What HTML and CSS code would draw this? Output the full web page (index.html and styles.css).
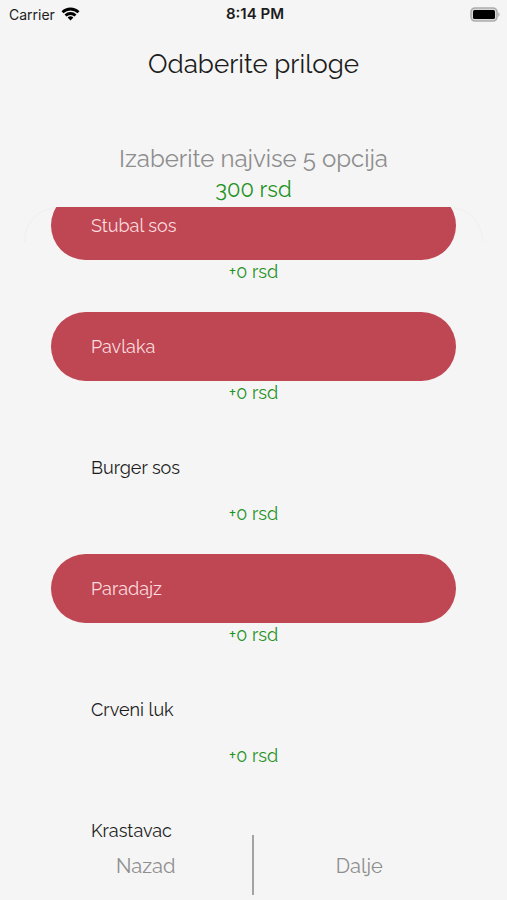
FILE: index.html
```html
<!DOCTYPE html>
<html lang="sr">
<head>
	<meta charset="utf-8">
	<meta name="viewport" content="width=device-width">
	<title>Odaberite priloge</title>
	<link rel="stylesheet" href="styles.css">
</head>
<body>
	<div class="status">
		<div class="carrier">
			<span>Carrier</span>
			<svg width="19" height="14" viewBox="0 0 18 14" fill="none" stroke="#000" stroke-width="2.8">
				<path d="M1 5.2 a11.6 11.6 0 0 1 16 0" />
				<path d="M4 8.5 a7.2 7.2 0 0 1 10 0" />
				<path d="M9 13.6 L6.1 10.6 a4.1 4.1 0 0 1 5.8 0 Z" fill="#000" stroke="none" />
			</svg>
		</div>
		<div class="time">8:14 PM</div>
		<div class="battery">
			<svg width="31" height="15" viewBox="0 0 31 15">
				<rect x="1" y="1" width="26" height="13" rx="4" fill="#d8d8d8" stroke="#adadad" stroke-width="1.6" />
				<rect x="3" y="3" width="22" height="9" rx="1.6" fill="#000" />
				<path d="M28.4 5 q2.4 2.5 0 5 Z" fill="#a9a9a9" />
			</svg>
		</div>
	</div>

	<h1 class="title">Odaberite priloge</h1>
	<p class="hint">Izaberite najvise 5 opcija</p>
	<p class="total">300 rsd</p>

	<main class="scroller">
		<ul class="options">
			<li>
				<label class="option"><input type="checkbox" checked>Stubal sos</label>
				<div class="price">+0 rsd</div>
			</li>
			<li>
				<label class="option"><input type="checkbox" checked>Pavlaka</label>
				<div class="price">+0 rsd</div>
			</li>
			<li>
				<label class="option"><input type="checkbox">Burger sos</label>
				<div class="price">+0 rsd</div>
			</li>
			<li>
				<label class="option"><input type="checkbox" checked>Paradajz</label>
				<div class="price">+0 rsd</div>
			</li>
			<li>
				<label class="option"><input type="checkbox">Crveni luk</label>
				<div class="price">+0 rsd</div>
			</li>
			<li>
				<label class="option"><input type="checkbox">Krastavac</label>
			</li>
		</ul>
	</main>

	<nav class="controls">
		<button type="button">Nazad</button>
		<div class="divider"></div>
		<button type="button">Dalje</button>
	</nav>
</body>
</html>
```

FILE: styles.css
```css
* {
	box-sizing: border-box;
}

body {
	background: #f5f5f5;
	color: #1c1c1c;
	display: flex;
	flex-direction: column;
	font-family: Raleway, Lato, sans-serif;
	font-variant-numeric: oldstyle-nums;
	height: 100vh;
	margin: 0;
	overflow: hidden;
}

.status {
	align-items: center;
	display: grid;
	flex: none;
	font-family: Inter, sans-serif;
	font-size: 14px;
	font-variant-numeric: normal;
	grid-template-columns: 1fr auto 1fr;
	height: 28px;
	padding: 0 6px 0 9px;
}
.status svg {
	display: block;
}
.carrier {
	align-items: center;
	display: flex;
	gap: 6px;
}
.time {
	font-size: 15px;
	font-weight: 600;
	line-height: 16px;
}
.battery {
	justify-self: end;
}

.title, .hint, .total {
	flex: none;
	font-weight: 400;
	margin: 0;
	text-align: center;
}
.title {
	font-size: 26px;
	line-height: 36px;
	margin: 18px 0 61px;
}
.hint {
	color: #8e8e8e;
	font-size: 24px;
	line-height: 32px;
}
.total {
	color: #1f921f;
	font-size: 22px;
	line-height: 28px;
	padding-bottom: 4px;
}

.scroller {
	flex: 1;
	min-height: 0;
	overflow: hidden;
	padding: 0 24px;
	position: relative;
}
/* faint rounded top edge of the list */
.scroller::before {
	border: 1px solid #efefef;
	border-bottom: 0;
	border-radius: 34px 34px 0 0;
	content: "";
	height: 34px;
	left: 24px;
	position: absolute;
	right: 24px;
	top: 0;
}
.options {
	display: flex;
	flex-direction: column;
	gap: 28px;
	list-style: none;
	margin: -16px 0 0;
	padding: 0 27px;
	position: relative;
}
.option {
	align-items: center;
	border-radius: 35px;
	cursor: pointer;
	display: flex;
	font-size: 18px;
	height: 69px;
	padding: 0 40px;
}
.option input {
	appearance: none;
	height: 0;
	margin: 0;
	width: 0;
}
.option:has(input:checked) {
	background: #bf4653;
	color: #fbdcdf;
}
.option:has(input:focus-visible) {
	outline: 2px solid #8e8e8e;
}
.price {
	color: #1f921f;
	font-size: 18px;
	line-height: 24px;
	text-align: center;
}

/* sits a little over the bottom of the list */
.controls {
	display: flex;
	flex: none;
	margin-top: -10px;
	padding: 0 42px 5px 40px;
	position: relative;
}
.controls button {
	background: none;
	border: 0;
	color: #8e8e8e;
	cursor: pointer;
	flex: 1 1 0;
	font: inherit;
	font-size: 20px;
	height: 60px;
	padding: 2px 0 0;
}
.divider {
	background: #a3a3a3;
	width: 2px;
}
```
